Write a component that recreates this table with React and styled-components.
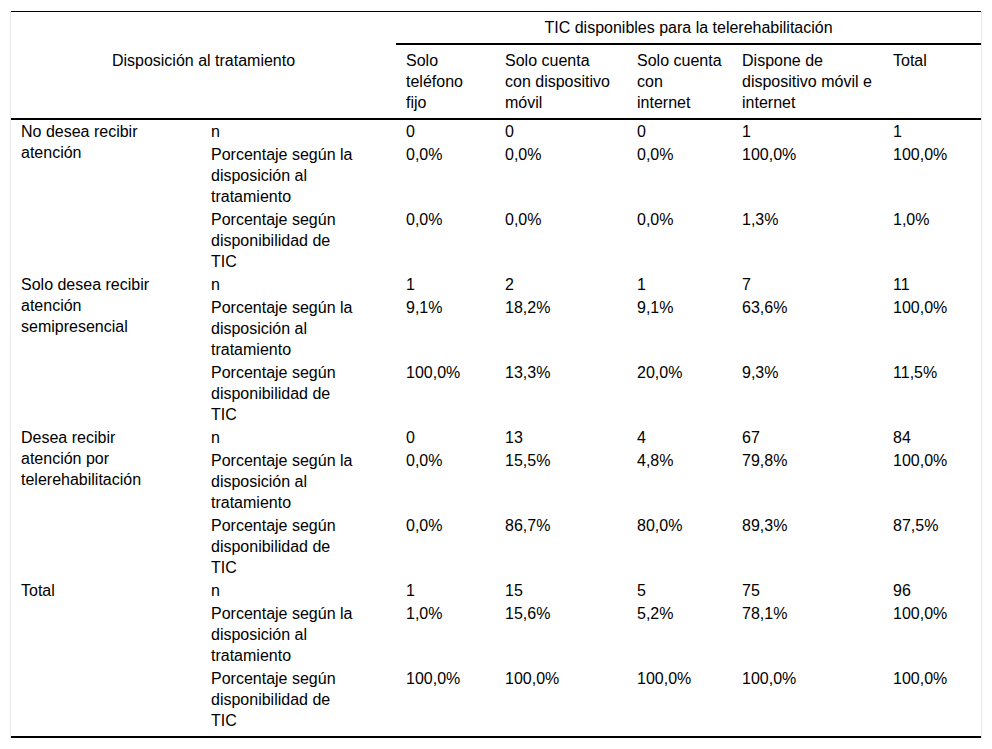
import React from "react";
import styled, { createGlobalStyle } from "styled-components";

const GlobalStyle = createGlobalStyle`
  body {
    margin: 0;
    background: #fff;
    font-family: "Liberation Sans", Arial, sans-serif;
    color: #000;
  }
`;

const Frame = styled.div`
  margin: 11px 0 0 10px;
  width: 970px;
  border-left: 1px solid #e8e8e8;
  border-right: 1px solid #e8e8e8;
`;

const Table = styled.table`
  width: 970px;
  table-layout: fixed;
  border-collapse: separate;
  border-spacing: 0;
  border-top: 1px solid #000;
  border-bottom: 2px solid #000;
  font-size: 16px;
  line-height: 21px;
`;

const Th = styled.th`
  font-weight: normal;
  text-align: ${(p) => (p.$center ? "center" : "left")};
  vertical-align: ${(p) => (p.$middle ? "middle" : "top")};
  padding: 5px ${(p) => p.$pr || 10}px ${(p) => p.$pb || 5}px 10px;
  border-bottom: ${(p) => (p.$rule ? "2px solid #000" : "none")};
`;

const Td = styled.td`
  vertical-align: top;
  padding: 1px ${(p) => p.$pr || 10}px ${(p) => (p.$last ? 5 : 1)}px 10px;
`;

const cols = [
  { width: 190, pr: 35 },
  { width: 195, pr: 40 },
  { width: 99, pr: 10 },
  { width: 132, pr: 12 },
  { width: 105, pr: 6 },
  { width: 151, pr: 8 },
  { width: 98, pr: 10 },
];

// the "con / internet" split in the original is kept with a break
const heads = [
  "Solo teléfono fijo",
  "Solo cuenta con dispositivo móvil",
  <>
    Solo cuenta con
    <br />
    internet
  </>,
  "Dispone de dispositivo móvil e internet",
  "Total",
];

const measures = [
  "n",
  "Porcentaje según la disposición al tratamiento",
  "Porcentaje según disponibilidad de TIC",
];

const groups = [
  {
    label: "No desea recibir atención",
    rows: [
      ["0", "0", "0", "1", "1"],
      ["0,0%", "0,0%", "0,0%", "100,0%", "100,0%"],
      ["0,0%", "0,0%", "0,0%", "1,3%", "1,0%"],
    ],
  },
  {
    label: "Solo desea recibir atención semipresencial",
    rows: [
      ["1", "2", "1", "7", "11"],
      ["9,1%", "18,2%", "9,1%", "63,6%", "100,0%"],
      ["100,0%", "13,3%", "20,0%", "9,3%", "11,5%"],
    ],
  },
  {
    label: "Desea recibir atención por telerehabilitación",
    rows: [
      ["0", "13", "4", "67", "84"],
      ["0,0%", "15,5%", "4,8%", "79,8%", "100,0%"],
      ["0,0%", "86,7%", "80,0%", "89,3%", "87,5%"],
    ],
  },
  {
    label: "Total",
    rows: [
      ["1", "15", "5", "75", "96"],
      ["1,0%", "15,6%", "5,2%", "78,1%", "100,0%"],
      ["100,0%", "100,0%", "100,0%", "100,0%", "100,0%"],
    ],
  },
];

const App = () => {
  return (
    <>
      <GlobalStyle />
      <Frame>
        <Table>
          <colgroup>
            {cols.map((c, i) => (
              <col key={i} style={{ width: c.width }} />
            ))}
          </colgroup>
          <thead>
            <tr>
              <Th colSpan={2} rowSpan={2} $center $middle $pb={15} $rule>
                Disposición al tratamiento
              </Th>
              <Th colSpan={5} $center $rule>
                TIC disponibles para la telerehabilitación
              </Th>
            </tr>
            <tr>
              {heads.map((h, i) => (
                <Th key={i} $pr={cols[i + 2].pr} $rule>
                  {h}
                </Th>
              ))}
            </tr>
          </thead>
          <tbody>
            {groups.map((g, gi) =>
              g.rows.map((r, ri) => {
                const last = gi === groups.length - 1 && ri === g.rows.length - 1;
                return (
                  <tr key={g.label + ri}>
                    {ri === 0 && (
                      <Td rowSpan={3} $pr={cols[0].pr} $last={gi === groups.length - 1}>
                        {g.label}
                      </Td>
                    )}
                    <Td $pr={cols[1].pr} $last={last}>
                      {measures[ri]}
                    </Td>
                    {r.map((v, vi) => (
                      <Td key={vi} $pr={cols[vi + 2].pr} $last={last}>
                        {v}
                      </Td>
                    ))}
                  </tr>
                );
              })
            )}
          </tbody>
        </Table>
      </Frame>
    </>
  );
};

export default App;
